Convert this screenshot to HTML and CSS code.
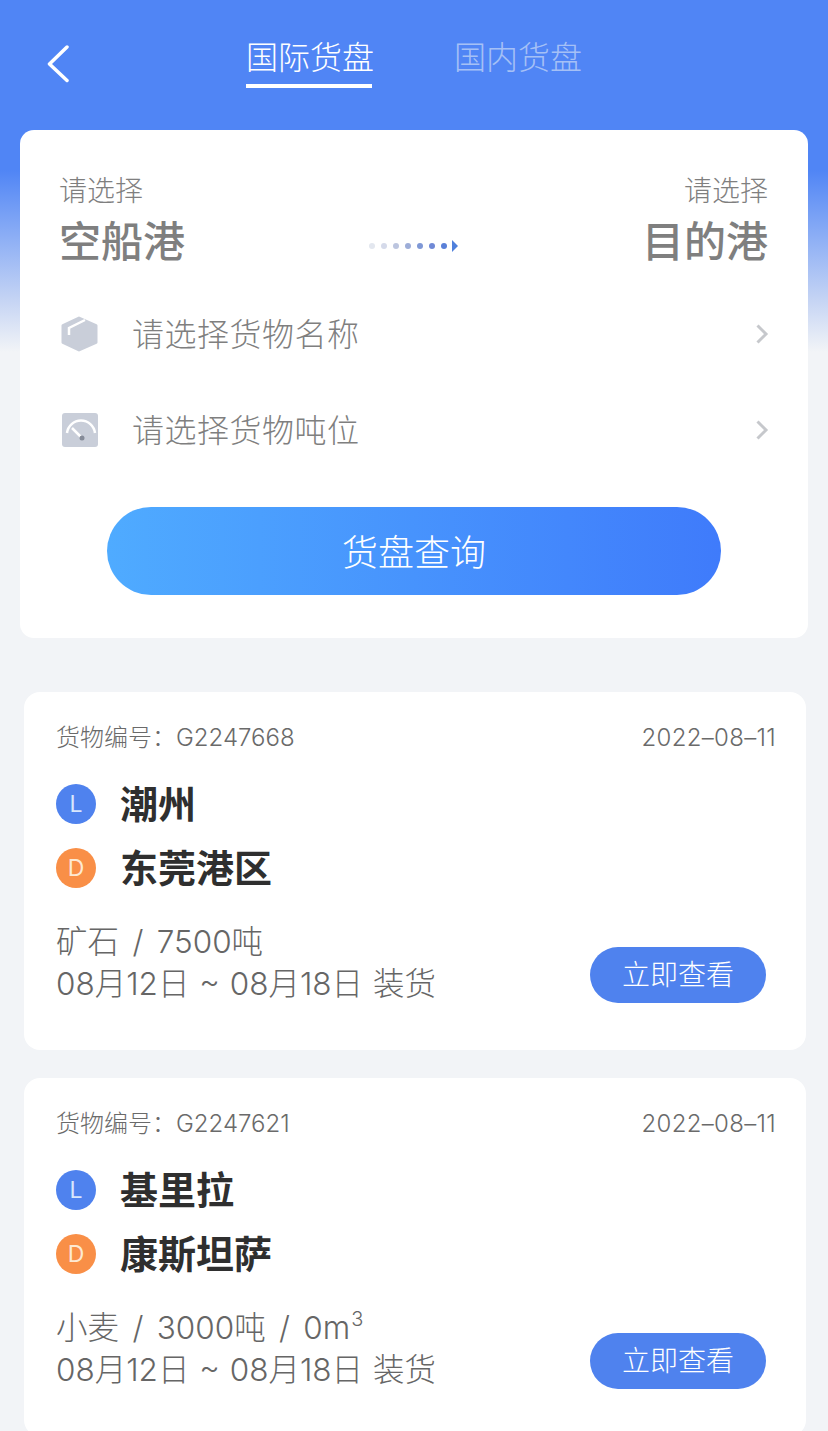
FILE: index.html
```html
<!DOCTYPE html>
<html lang="zh-CN">
<head>
<meta charset="utf-8">
<title>货盘</title>
<link rel="stylesheet" href="styles.css">
</head>
<body>
<div class="page">
  <header class="top">
    <svg class="back" width="24" height="38" viewBox="0 0 24 38"><path d="M21 2 L3.500 19 L21 35.500" fill="none" stroke="#fff" stroke-width="3.500" stroke-linecap="round" stroke-linejoin="round"/></svg>
    <nav class="tabs">
      <div class="tab tab-on">国际货盘</div>
      <div class="tab tab-off">国内货盘</div>
    </nav>
  </header>

  <section class="search">
    <div class="ports">
      <div class="port port-start">
        <div class="port-hint">请选择</div>
        <div class="port-name">空船港</div>
      </div>
      <svg class="dots" width="92" height="14" viewBox="0 0 92 14">
        <circle cx="5" cy="7" r="3" fill="#e3e7ef"/>
        <circle cx="17" cy="7" r="3" fill="#d5daea"/>
        <circle cx="29" cy="7" r="3" fill="#bcc5df"/>
        <circle cx="41" cy="7" r="3" fill="#9dadd8"/>
        <circle cx="53" cy="7" r="3" fill="#7f98d6"/>
        <circle cx="65" cy="7" r="3" fill="#7089d6"/>
        <circle cx="77" cy="7" r="3" fill="#5a80d8"/>
        <path d="M85 1 L91 7 L85 13 Z" fill="#4f80dc"/>
      </svg>
      <div class="port port-end">
        <div class="port-hint">请选择</div>
        <div class="port-name">目的港</div>
      </div>
    </div>

    <div class="pick pick-first">
      <svg class="pick-icon" width="38" height="36" viewBox="0 0 38 36">
        <path d="M18 2 L35 9.500 L35 26.500 L18 34 L2 26.500 L2 9.500 Z" fill="#c9ced9" stroke="#c9ced9" stroke-width="3" stroke-linejoin="round"/>
        <path d="M8 19 L8 12 L24 4" fill="none" stroke="#fff" stroke-width="2.500"/>
      </svg>
      <span class="pick-text">请选择货物名称</span>
      <svg class="chev" width="14" height="22" viewBox="0 0 14 22"><path d="M2.500 2.500 L11 11 L2.500 19.500" fill="none" stroke="#c6c8cc" stroke-width="3"/></svg>
    </div>
    <div class="pick">
      <svg class="pick-icon" width="38" height="36" viewBox="0 0 38 36">
        <rect x="1" y="1" width="36" height="34" rx="3" fill="#c9ced9"/>
        <path d="M6 21 A14.100 14.100 0 0 1 34 21" fill="none" stroke="#fff" stroke-width="2.500"/>
        <path d="M11 16 L21 26" fill="none" stroke="#fff" stroke-width="2.500"/>
        <circle cx="21" cy="26" r="2.500" fill="#858b98"/>
      </svg>
      <span class="pick-text">请选择货物吨位</span>
      <svg class="chev" width="14" height="22" viewBox="0 0 14 22"><path d="M2.500 2.500 L11 11 L2.500 19.500" fill="none" stroke="#c6c8cc" stroke-width="3"/></svg>
    </div>

    <div class="query">货盘查询</div>
  </section>

  <article class="card">
    <div class="meta"><span>货物编号：G2247668</span><span class="date">2022–08–11</span></div>
    <div class="route">
      <div class="stop"><span class="badge badge-l">L</span><span class="city">潮州</span></div>
      <div class="stop"><span class="badge badge-d">D</span><span class="city">东莞港区</span></div>
    </div>
    <div class="bottom">
      <div class="info">
        <div>矿石 <span class="sep">/</span> 7500吨</div>
        <div>08月12日 ~ 08月18日 装货</div>
      </div>
      <div class="view">立即查看</div>
    </div>
  </article>

  <article class="card">
    <div class="meta"><span>货物编号：G2247621</span><span class="date">2022–08–11</span></div>
    <div class="route">
      <div class="stop"><span class="badge badge-l">L</span><span class="city">基里拉</span></div>
      <div class="stop"><span class="badge badge-d">D</span><span class="city">康斯坦萨</span></div>
    </div>
    <div class="bottom">
      <div class="info">
        <div>小麦 <span class="sep">/</span> 3000吨 <span class="sep">/</span> 0m<sup class="cube">3</sup></div>
        <div>08月12日 ~ 08月18日 装货</div>
      </div>
      <div class="view">立即查看</div>
    </div>
  </article>
</div>
</body>
</html>
```

FILE: styles.css
```css
* { box-sizing: border-box; }
html, body { margin: 0; padding: 0; }
body {
  font-family: "Inter", "Noto Sans CJK SC", sans-serif;
  background: #f2f4f7;
}
.page {
  height: 1431px;
  overflow: hidden;
  background: linear-gradient(#5085f5 0, #5085f5 170px, #8fb0f5 240px, #c5d4f4 300px, #f2f4f7 352px);
}
.top {
  position: relative;
  height: 130px;
  padding: 29px 0 0 246px;
}
.back { position: absolute; left: 46px; top: 45px; }
.tabs { display: flex; gap: 82px; }
.tab {
  width: 126px;
  height: 59px;
  font-size: 32px;
  line-height: 58px;
  font-weight: 300;
  white-space: nowrap;
}
.tab-on { color: #fff; border-bottom: 4px solid #fff; }
.tab-off { color: #a5c0f6; }

.search {
  margin: 0 20px;
  height: 508px;
  background: #fff;
  border-radius: 14px;
  padding: 43px 40px 0 41px;
}
.ports { display: flex; justify-content: space-between; align-items: flex-start; }
.port-hint { font-size: 28px; line-height: 36px; color: #7f7f7f; font-weight: 300; }
.port-name { font-size: 42px; line-height: 66px; color: #7f7f7f; font-weight: 500; }
.port-start { margin-left: -2px; }
.port-end { text-align: right; }
.dots { margin: 66px 2px 0 0; }

.pick { display: flex; align-items: center; height: 96px; }
.pick-first { margin-top: 11px; }
.pick-icon { flex: none; }
.pick-text {
  flex: 1;
  margin-left: 33px;
  padding-bottom: 4px;
  font-size: 32px;
  letter-spacing: 0.500px;
  color: #7f7f7f;
  font-weight: 300;
}
.chev { flex: none; margin-right: -1px; }

.query {
  margin: 29px 47px 0 46px;
  height: 88px;
  border-radius: 44px;
  background: linear-gradient(90deg, #4fabff, #3f7bfb);
  color: #fff;
  font-size: 36px;
  line-height: 92px;
  text-align: center;
  font-weight: 300;
}

.card {
  margin: 0 22px 28px 24px;
  height: 358px;
  background: #fff;
  border-radius: 16px;
  padding: 27px 30px 0 32px;
}
.search + .card { margin-top: 54px; }
.meta {
  display: flex;
  justify-content: space-between;
  font-size: 24px;
  line-height: 38px;
  color: #6a6a6a;
  font-weight: 300;
}
.date { letter-spacing: 0.300px; }
.route { margin-top: 27px; display: flex; flex-direction: column; gap: 24px; }
.stop { display: flex; align-items: center; height: 40px; }
.badge {
  flex: none;
  width: 40px;
  height: 40px;
  border-radius: 50%;
  text-align: center;
  font-size: 23px;
  line-height: 40px;
  color: #fde9d2;
  font-weight: 400;
}
.badge-l { background: #4f82ee; color: #d8e6fc; }
.badge-d { background: #f98f47; }
.city {
  margin-left: 24px;
  padding-bottom: 6px;
  font-size: 38px;
  font-weight: 700;
  color: #2f2f2f;
  white-space: nowrap;
}
.bottom {
  position: relative;
  margin-top: 33px;
  font-size: 31.500px;
  line-height: 42px;
  word-spacing: 1px;
  color: #666;
  font-weight: 300;
  white-space: nowrap;
}
.sep { margin: 0 3.500px; }
.cube { font-size: 20px; line-height: 0; vertical-align: 13px; margin-left: 1px; }
.view {
  position: absolute;
  right: 10px;
  top: 26px;
  width: 176px;
  height: 56px;
  border-radius: 28px;
  background: #4f82ee;
  color: #fff;
  font-size: 28px;
  line-height: 56px;
  text-align: center;
  word-spacing: 0;
}
```
